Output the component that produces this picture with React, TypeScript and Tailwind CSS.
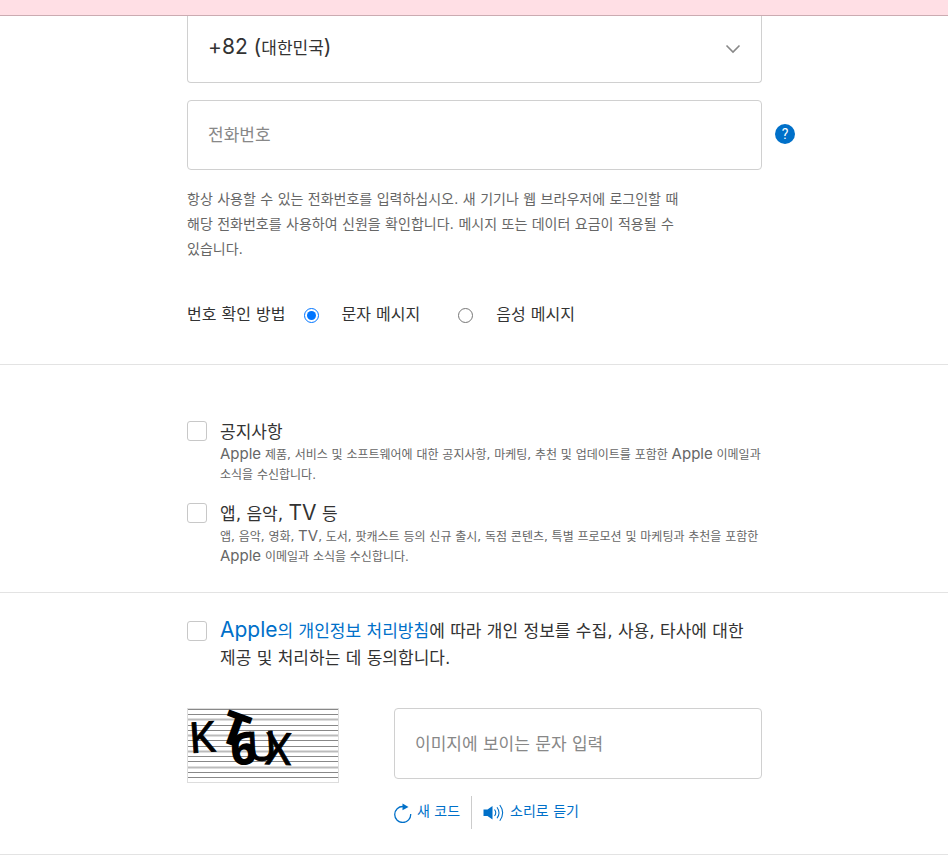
import type { ReactNode } from "react";
import { useState } from "react";
import { clsx } from "clsx";

const countries = [{ code: "+82", name: "대한민국" }];

const verifyMethods = [
	{ id: "sms", label: "문자 메시지" },
	{ id: "voice", label: "음성 메시지" },
];

function Latin({ children }: { children: ReactNode }) {
	return (
		<span className="font-['Inter',sans-serif] text-[21px] leading-none">
			{children}
		</span>
	);
}

function SmallLatin({ children }: { children: ReactNode }) {
	return (
		<span className="font-['Inter',sans-serif] text-[15px] leading-none">
			{children}
		</span>
	);
}

function CheckRow({
	id,
	title,
	children,
	className,
}: {
	id: string;
	title: ReactNode;
	children: ReactNode;
	className?: string;
}) {
	return (
		<div className={clsx("flex items-start gap-[13px]", className)}>
			<Checkbox id={id} className="mt-px" />
			<div className="flex-1">
				<label htmlFor={id} className="block h-6 text-[17px] leading-6">
					{title}
				</label>
				<p className="mt-px text-xs leading-5 text-[#666]">{children}</p>
			</div>
		</div>
	);
}

function Checkbox({ id, className }: { id: string; className?: string }) {
	return (
		<input
			type="checkbox"
			id={id}
			className={clsx(
				"size-5 shrink-0 appearance-none rounded-[3px] border border-[#c8c8c8] bg-white",
				"checked:border-[#0070c9] checked:bg-[#0070c9]",
				className,
			)}
		/>
	);
}

function Captcha() {
	const lines = Array.from({ length: 14 }, (_, i) => i);
	return (
		<svg
			role="img"
			aria-label="보안 문자"
			viewBox="0 0 150 73"
			className="h-[75px] w-[152px] shrink-0 overflow-visible border border-[#ddd]"
		>
			{lines.map((i) => (
				<path
					key={i}
					d={`M0 ${Math.round(i * 5.23) + 0.5}H150`}
					stroke={i % 3 === 2 ? "#bbb" : "#888"}
					strokeWidth={i % 3 === 2 ? 2 : 1}
				/>
			))}
			<g fill="#000" fontFamily="'Noto Sans', sans-serif">
				<text transform="translate(2 44) rotate(-4)" fontSize="42" stroke="#000" strokeWidth="1">
					K
				</text>
				<text transform="translate(29 31) rotate(20)" fontSize="46" fontWeight="800">
					T
				</text>
				<text transform="translate(44 57) rotate(-6)" fontSize="45" fontWeight="800">
					6
				</text>
				<text transform="translate(60 52) rotate(-3)" fontSize="40" stroke="#000" strokeWidth="1">
					U
				</text>
				<text transform="translate(77 55) rotate(2)" fontSize="44" stroke="#000" strokeWidth="1">
					X
				</text>
			</g>
		</svg>
	);
}

function RefreshIcon() {
	return (
		<svg viewBox="0 0 18 20" className="mt-1 h-5 w-[18px]" aria-hidden="true">
			<path d="M9 3.5A8 8 0 1 0 16.7 11" fill="none" stroke="#0070c9" strokeWidth="1.3" />
			<path d="M8.5 0.5L14.5 4L8.5 7.2Z" fill="#0070c9" />
		</svg>
	);
}

function SpeakerIcon() {
	return (
		<svg viewBox="0 0 21 18" className="mt-1 h-[18px] w-[21px]" aria-hidden="true">
			<path d="M0.5 5.5H4.5L9.5 2V15.5L4.5 12H0.5Z" fill="#0070c9" />
			<g fill="none" stroke="#0070c9" strokeWidth="1.1">
				<path d="M11.5 5.5Q14 8.8 11.5 12" />
				<path d="M14 3.2Q18 8.8 14 14.3" />
				<path d="M16.8 1Q22.5 8.8 16.8 16.8" />
			</g>
		</svg>
	);
}

export default function App() {
	const [method, setMethod] = useState("sms");

	return (
		<div className="bg-white font-['DejaVu_Sans','Noto_Sans_CJK_KR',sans-serif] text-[#333]">
			<div className="h-4 border-b border-[#cbabb1] bg-[#ffdfe5]" />

			{/* Phone number */}
			<section className="border-b border-[#e3e3e3] pb-[37px]">
				<div className="mx-auto max-w-xl pl-px">
					<div className="relative flex h-[67px] items-center justify-between rounded-b border border-t-0 border-[#d0d0d0] px-5">
						<span aria-hidden="true" className="pb-0.5 text-[17px] leading-6">
							<Latin>+82 (</Latin>대한민국<Latin>)</Latin>
						</span>
						<svg viewBox="0 0 16 10" className="h-2.5 w-4" aria-hidden="true">
							<path d="M1.5 1.5L8 8L14.5 1.5" fill="none" stroke="#888" strokeWidth="1.6" />
						</svg>
						<select aria-label="국가 번호" className="absolute inset-0 opacity-0">
							{countries.map((country) => (
								<option key={country.code} value={country.code}>
									{country.code} ({country.name})
								</option>
							))}
						</select>
					</div>

					<div className="relative mt-[17px]">
						<input
							type="tel"
							aria-label="전화번호"
							placeholder="전화번호"
							className="block h-[70px] w-full rounded border border-[#d0d0d0] px-5 text-[17px] placeholder:text-[#888]"
						/>
						<button
							type="button"
							aria-label="도움말"
							className="absolute top-6 left-full ml-[13px] size-5 rounded-full bg-[#0070c9] text-center font-['Roboto',sans-serif] text-sm leading-5 text-white"
						>
							?
						</button>
					</div>

					<p className="mt-[17px] text-sm leading-[25px] text-[#666]">
						항상 사용할 수 있는 전화번호를 입력하십시오. 새 기기나 웹 브라우저에 로그인할 때
						<br />
						해당 전화번호를 사용하여 신원을 확인합니다. 메시지 또는 데이터 요금이 적용될 수
						<br />
						있습니다.
					</p>

					<fieldset className="mt-[41px] flex items-center text-base leading-6">
						<legend className="float-left mr-[18px]">번호 확인 방법</legend>
						{verifyMethods.map(({ id, label }) => (
							<label key={id} className="mr-[38px] flex items-center gap-[23px]">
								<input
									type="radio"
									name="verify"
									value={id}
									checked={method === id}
									onChange={() => setMethod(id)}
									className="size-[15px]"
								/>
								{label}
							</label>
						))}
					</fieldset>
				</div>
			</section>

			{/* Subscriptions */}
			<section className="border-b border-[#e3e3e3] pt-[55px] pb-[25px]">
				<div className="mx-auto max-w-xl pl-px">
					<CheckRow id="announcements" title="공지사항">
						<SmallLatin>Apple</SmallLatin> 제품, 서비스 및 소프트웨어에 대한 공지사항, 마케팅, 추천 및
						업데이트를 포함한 <SmallLatin>Apple</SmallLatin> 이메일과
						<br />
						소식을 수신합니다.
					</CheckRow>
					<CheckRow
						id="media"
						className="mt-[17px]"
						title={
							<>
								앱, 음악, <Latin>TV</Latin> 등
							</>
						}
					>
						앱, 음악, 영화, <SmallLatin>TV</SmallLatin>, 도서, 팟캐스트 등의 신규 출시, 독점 콘텐츠,
						특별 프로모션 및 마케팅과 추천을 포함한
						<br />
						<SmallLatin>Apple</SmallLatin> 이메일과 소식을 수신합니다.
					</CheckRow>
				</div>
			</section>

			{/* Agreement and captcha */}
			<section className="border-b border-[#e3e3e3] pt-[25px] pb-[25px]">
				<div className="mx-auto max-w-xl pl-px">
					<div className="flex items-start gap-[13px]">
						<Checkbox id="agree" className="mt-[3px]" />
						<label htmlFor="agree" className="flex-1 text-[17px] leading-[27px]">
							<a href="#privacy" className="text-[#0070c9]">
								<Latin>Apple</Latin>의 개인정보 처리방침
							</a>
							에 따라 개인 정보를 수집, 사용, 타사에 대한
							<br />
							제공 및 처리하는 데 동의합니다.
						</label>
					</div>

					<div className="mt-9 flex items-start gap-[55px]">
						<Captcha />
						<div className="min-w-0 flex-1">
							<input
								type="text"
								aria-label="이미지에 보이는 문자 입력"
								placeholder="이미지에 보이는 문자 입력"
								className="block h-[71px] w-full rounded border border-[#d0d0d0] px-5 text-[17px] placeholder:text-[#888]"
							/>
							<div className="mt-[17px] flex h-[33px] text-sm text-[#0070c9]">
								<button
									type="button"
									className="flex items-center gap-[5px] border-r border-[#ccc] pr-[11px] pb-1"
								>
									<RefreshIcon />새 코드
								</button>
								<button type="button" className="flex items-center gap-1.5 pb-1 pl-[11px]">
									<SpeakerIcon />
									소리로 듣기
								</button>
							</div>
						</div>
					</div>
				</div>
			</section>
		</div>
	);
}
